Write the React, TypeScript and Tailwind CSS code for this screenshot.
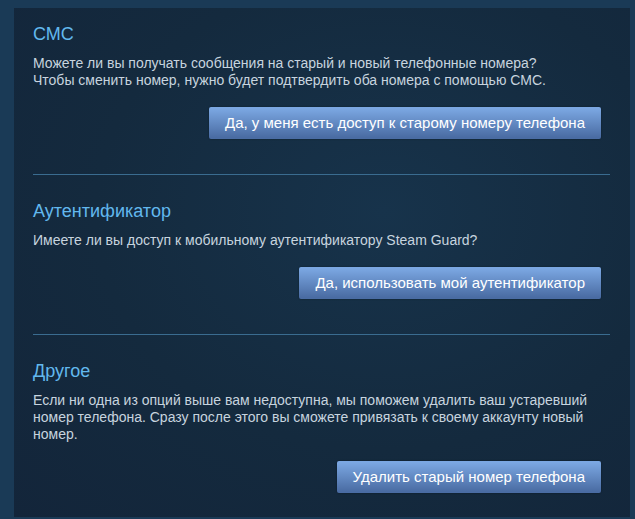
import React from "react";

type Option = {
  title: string;
  text: string[];
  action: string;
};

const options: Option[] = [
  {
    title: "СМС",
    text: [
      "Можете ли вы получать сообщения на старый и новый телефонные номера?",
      "Чтобы сменить номер, нужно будет подтвердить оба номера с помощью СМС.",
    ],
    action: "Да, у меня есть доступ к старому номеру телефона",
  },
  {
    title: "Аутентификатор",
    text: ["Имеете ли вы доступ к мобильному аутентификатору Steam Guard?"],
    action: "Да, использовать мой аутентификатор",
  },
  {
    title: "Другое",
    text: [
      "Если ни одна из опций выше вам недоступна, мы поможем удалить ваш устаревший номер телефона. Сразу после этого вы сможете привязать к своему аккаунту новый номер.",
    ],
    action: "Удалить старый номер телефона",
  },
];

function OptionBlock({ option }: { option: Option }) {
  return (
    <div>
      <h2 className="text-[18px] leading-[22px] text-[#62b8ee]">{option.title}</h2>
      <div className="mt-[10px] text-[14px] leading-[17px] text-[#c7d4df]">
        {option.text.map((line, i) => (
          <p key={i}>{line}</p>
        ))}
      </div>
      <div className="mt-[18px] flex justify-end pr-[9px]">
        <button className="h-8 rounded-[2px] px-4 text-[15px] text-white bg-[linear-gradient(to_bottom,#7ba7e2_5%,#4a6ca3_95%)] shadow-[0_0_2px_rgba(0,0,0,0.4)]">
          {option.action}
        </button>
      </div>
    </div>
  );
}

export default function App() {
  return (
    <div
      className="min-h-[519px] w-[635px] bg-[#1a3a56] pl-[14px] pr-[5px] pt-2 pb-[2px]"
      style={{ fontFamily: '"Liberation Sans", Arial, sans-serif' }}
    >
      {/* Panel */}
      <div className="h-[509px] bg-[radial-gradient(ellipse_at_60%_40%,#17334b_0%,#142a3e_55%,#13253a_100%)] pl-[19px] pr-[20px] pt-[15px]">
        {options.map((o, i) => (
          <React.Fragment key={o.title}>
            {i > 0 && <div className="mt-[35px] mb-[25px] h-px bg-[#3a6c90]" />}
            <OptionBlock option={o} />
          </React.Fragment>
        ))}
      </div>
    </div>
  );
}
